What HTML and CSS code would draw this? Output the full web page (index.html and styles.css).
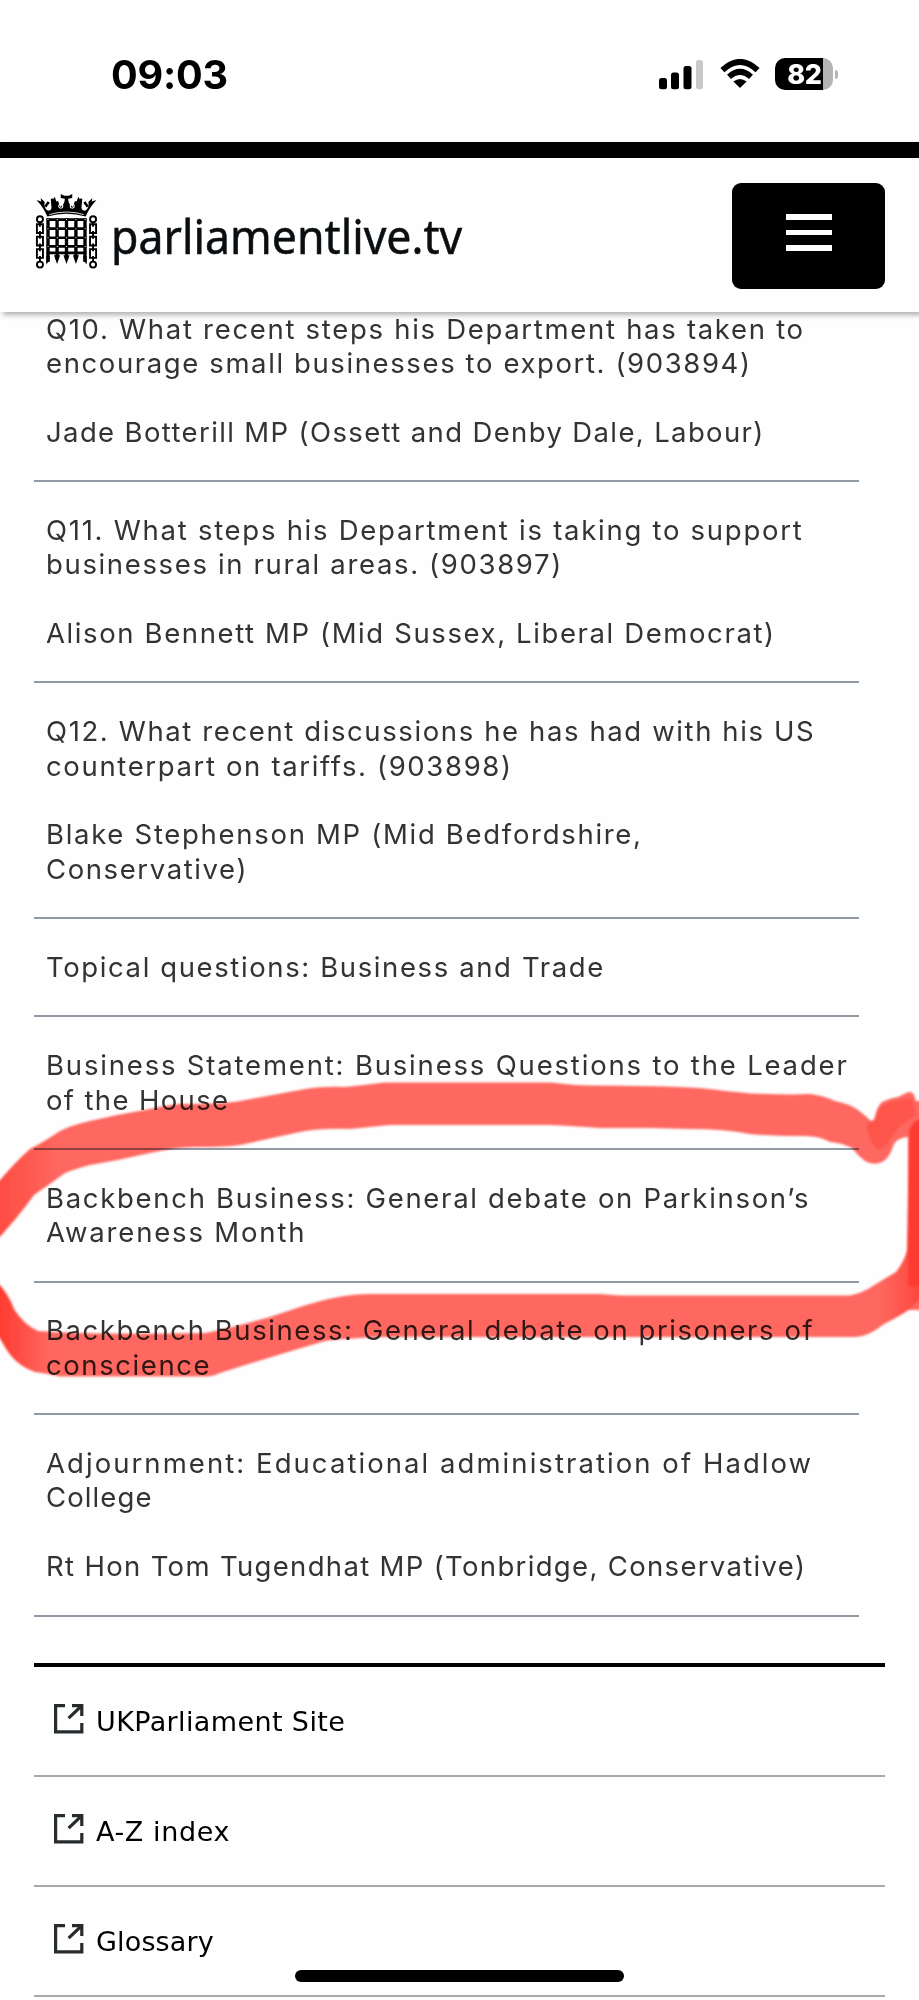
FILE: index.html
```
<!DOCTYPE html>
<html lang="en">
<head>
<meta charset="utf-8">
<title>parliamentlive.tv</title>
<link rel="stylesheet" href="styles.css">
</head>
<body>
<div class="screen">
  <div class="status">
    <span class="time">09:03</span>
    <div class="indicators">
      <svg class="signal" width="44" height="30" viewBox="0 0 44 30">
        <rect x="0" y="18" width="8" height="11.3" rx="2.5"/>
        <rect x="12" y="12.5" width="8" height="16.8" rx="2.5"/>
        <rect x="24.5" y="6" width="8" height="23.3" rx="2.5"/>
        <rect x="37" y="0" width="7" height="29.3" rx="2.5" fill="#c9c9c9"/>
      </svg>
      <svg class="wifi" width="40" height="30" viewBox="0 0 40 30">
        <g fill="none" stroke="#000" stroke-width="5.8">
          <path d="M2.4 11.2 Q20 -5.4 37.6 11.2"/>
          <path d="M9 17.9 Q20 7.8 31 17.9"/>
        </g>
        <path d="M20 29 L13.4 22.6 Q20 17.2 26.6 22.6 Z"/>
      </svg>
      <div class="battery"><div class="cell"><span>82</span></div><i></i></div>
    </div>
  </div>
  <header class="header">
    <a class="brand">
      <svg class="portcullis" width="63" height="78" viewBox="46 36 186 232">
        <path d="M82 109 Q70 82 55 66 L50 60 L64 64 L62 54 L74 66 Q70 84 84 92 Q98 92 96 72 Q96 60 104 50 L108 62 Q116 88 124 78 Q134 70 134 56 L122 54 V42 L132 47 H146 L156 42 V54 L144 56 Q144 70 154 78 Q162 88 170 62 L174 50 Q182 60 182 72 Q180 92 194 92 Q208 84 204 66 L216 54 L214 64 L228 60 L223 66 Q208 82 196 109 Q139 92 82 109Z"/>
        <path d="M76 80l10-14M99 90l-3-34M118 86l-8-22M160 86l8-22M179 90l3-34M202 80l-10-14M139 92V50" stroke="#000" stroke-width="8"/>
        <g fill="none" stroke="#fff" stroke-width="3"><circle cx="87" cy="82" r="5"/><circle cx="122" cy="78" r="6"/><circle cx="156" cy="78" r="6"/><circle cx="191" cy="82" r="5"/></g>
        <path d="M88 103 Q139 88 190 103" fill="none" stroke="#fff" stroke-width="2.5"/>
        <g fill="none" stroke="#000">
          <path stroke-width="10" d="M84 114V244M111 114V236M139 114V236M167 114V236M194 114V244"/>
          <path stroke-width="8" d="M80 118H198M80 145H198M80 172H198M80 198H198M80 217H198"/>
          <g stroke-width="5.6">
            <circle cx="60" cy="117" r="9"/><circle cx="218" cy="117" r="9"/>
            <path d="M51 132h18v26h-18zM51 169h18v26h-18zM51 206h18v26h-18zM209 132h18v26h-18zM209 169h18v26h-18zM209 206h18v26h-18z"/>
            <path d="M60 126v13M60 152v23M60 189v23M60 226v17M218 126v13M218 152v23M218 189v23M218 226v17"/>
            <circle cx="60" cy="252" r="9"/><circle cx="218" cy="252" r="9"/>
          </g>
        </g>
        <path d="M102 224h18l-9 26zM130 224h18l-9 26zM158 224h18l-9 26zM79 226h10v12l-10 14zM199 226h-10v12l10 14z"/>
        <path d="M82.500 118h115M82.500 145h115M82.500 172h115M82.500 198h115" stroke="#fff" stroke-width="3" stroke-dasharray="3 24.600" fill="none"/>
      </svg>
      <span class="brand-name">parliamentlive.tv</span>
    </a>
    <button class="menu" aria-label="Menu"><i></i><i></i><i></i></button>
  </header>
  <main class="agenda">
    <article class="item first">
      <p><span class="a1">Q10. What recent steps his Department has taken to</span><span class="a2">encourage small businesses to export. (903894)</span></p>
      <p><span class="a3">Jade Botterill MP (Ossett and Denby Dale, Labour)</span></p>
    </article>
    <article class="item">
      <p><span class="a4">Q11. What steps his Department is taking to support</span><span class="a5">businesses in rural areas. (903897)</span></p>
      <p><span class="a6">Alison Bennett MP (Mid Sussex, Liberal Democrat)</span></p>
    </article>
    <article class="item">
      <p><span class="a7">Q12. What recent discussions he has had with his US</span><span class="a8">counterpart on tariffs. (903898)</span></p>
      <p><span class="a9">Blake Stephenson MP (Mid Bedfordshire,</span><span class="a10">Conservative)</span></p>
    </article>
    <article class="item">
      <p><span class="a11">Topical questions: Business and Trade</span></p>
    </article>
    <article class="item">
      <p><span class="a12">Business Statement: Business Questions to the Leader</span><span class="a13">of the House</span></p>
    </article>
    <article class="item">
      <p><span class="a14">Backbench Business: General debate on Parkinson’s</span><span class="a15">Awareness Month</span></p>
    </article>
    <article class="item">
      <p><span class="a16">Backbench Business: General debate on prisoners of</span><span class="a17">conscience</span></p>
    </article>
    <article class="item">
      <p><span class="a18">Adjournment: Educational administration of Hadlow</span><span class="a19">College</span></p>
      <p><span class="a20">Rt Hon Tom Tugendhat MP (Tonbridge, Conservative)</span></p>
    </article>
  </main>
  <footer class="links">
    <a><svg class="ext" viewBox="0 0 30 30"><path d="M11 1.6H1.6V27.8H27.8V19"/><path d="M18 1.6H27.8V12M27 2.4L14.6 14.2"/></svg><span class="site">UKParliament Site</span></a>
    <a><svg class="ext" viewBox="0 0 30 30"><path d="M11 1.6H1.6V27.8H27.8V19"/><path d="M18 1.6H27.8V12M27 2.4L14.6 14.2"/></svg><span class="index">A-Z index</span></a>
    <a><svg class="ext" viewBox="0 0 30 30"><path d="M11 1.6H1.6V27.8H27.8V19"/><path d="M18 1.6H27.8V12M27 2.4L14.6 14.2"/></svg><span class="glossary">Glossary</span></a>
  </footer>
  <svg class="marker" width="919" height="2000" viewBox="0 0 919 2000">
    <defs>
      <linearGradient id="l1" x1="0" x2="1" y1="0" y2="0"><stop offset="0" stop-color="#ff4a40"/><stop offset=".07" stop-color="#ff6860"/><stop offset="1" stop-color="#ff6860"/></linearGradient>
      <linearGradient id="l2" x1="0" x2="1" y1="0" y2="0"><stop offset="0" stop-color="#ff382e"/><stop offset=".06" stop-color="#ff6860"/><stop offset=".95" stop-color="#ff6860"/><stop offset="1" stop-color="#ff4339"/></linearGradient>
      <filter id="soft" x="-2%" y="-5%" width="104%" height="110%"><feGaussianBlur stdDeviation=".9"/></filter>
    </defs>
    <g filter="url(#soft)">
      <path fill="url(#l1)" d="M-5 1186 Q14 1163 30 1149 Q42 1143 60 1131 Q72 1125 90 1121 Q120 1114 150 1109 Q172 1104 183 1104 Q225 1104 240 1101 L300 1090 Q320 1086 345 1087 Q365 1085 385 1082.500 H550 Q570 1085 590 1085.500 Q660 1085.500 700 1088 Q735 1092 750 1093.500 Q790 1095 810 1094 Q825 1096 835 1101 Q850 1104 858 1110 Q866 1116 871 1121 L874 1120 Q877 1106 882 1102 Q890 1098 898 1097 L906 1093 Q912 1090 914 1095 L916 1101 H925 V1310 H908 V1137 Q897 1138 894 1144 Q890 1156 885 1160 Q876 1167 865 1161 Q858 1156 852 1148 Q842 1143 830 1142 Q820 1136 805 1136 Q770 1136 750 1134 Q725 1129 690 1129 L650 1128 L600 1128 Q570 1126 550 1125 H390 Q370 1127 350 1129 Q320 1128 300 1132 L240 1145 Q225 1147 200 1147 Q180 1146 150 1153 Q120 1160 90 1165 Q75 1169 65 1173 Q50 1184 34 1195 Q16 1220 -5 1242Z"/>
      <path fill="url(#l2)" d="M-5 1280 Q8 1292 14 1309 Q24 1325 38 1331 Q90 1335 205 1333 Q222 1330 270 1317 L300 1307 Q340 1294 370 1294 H600 L620 1295.500 H850 Q859 1294 868 1289 Q884 1279 896 1272 Q905 1260 907 1250 H925 V1290 Q919 1301 910 1309 Q900 1316 884 1324 Q868 1337 855 1337 H450 Q360 1336 325 1341 Q270 1357 220 1373 Q213 1376.500 205 1376.500 H60 Q45 1373 35 1372 Q15 1365 5 1347 L-5 1330Z"/>
      <path fill="#ff3a30" d="M909 1130 Q914 1118 925 1118 V1282 Q913 1290 908 1284 Q909 1260 907 1252 Z"/>
      <path fill="#ff453b" opacity=".55" d="M867 1123 Q876 1122 879 1108 Q890 1100 912 1098 L916 1115 Q896 1126 890 1140 Q882 1152 876 1148 Q866 1136 867 1123Z"/>
    </g>
  </svg>
  <div class="home"></div>
</div>
</body>
</html>
```
FILE: styles.css
```
* { box-sizing: border-box; }
body { margin: 0; background: #fefefe; }
.screen { position: relative; width: 919px; height: 2000px; overflow: hidden; background: #fefefe; isolation: isolate; }

.status { height: 142px; display: flex; justify-content: space-between; align-items: flex-start; padding: 58px 81px 0 111px; background: #fff; }
.time { font: 700 39.6px/34px Inter, sans-serif; letter-spacing: -.2px; color: #000; }
.indicators { display: flex; align-items: flex-start; }
.signal { margin: 2px 17px 0 0; }
.wifi { margin: 1px 15px 0 0; }
.battery { display: flex; align-items: center; gap: 2px; height: 32px; }
.cell { width: 58px; height: 32px; border-radius: 10px; background: linear-gradient(90deg, #000 48px, #b4b4b4 48px); text-align: center; font: 800 27px/33px Inter, sans-serif; letter-spacing: -.3px; color: #fff; padding-left: 1px; }
.battery i { width: 3px; height: 9px; border-radius: 0 5px 5px 0; background: #b4b4b4; }

.header { position: relative; height: 170px; border-top: 16px solid #000; background: #fefefe; display: flex; justify-content: space-between; align-items: flex-start; padding: 25px 34px 0 35px; box-shadow: 3px 3px 5px rgba(0, 0, 0, .3); }
.brand { display: flex; align-items: flex-start; padding-top: 9px; }
.brand-name { margin-left: 13px; padding-top: 11px; font: 400 48px/65px "Noto Sans", sans-serif; color: #0a0e10; -webkit-text-stroke: .5px #0a0e10; transform: scaleX(.93); transform-origin: 0 0; white-space: nowrap; }
.menu { width: 153px; height: 106px; border: 0; border-radius: 9px; background: #000; padding: 31px 0 0; display: flex; flex-direction: column; align-items: center; justify-content: flex-start; gap: 10px; }
.menu i { width: 46px; height: 5.5px; background: #fff; }

.agenda { width: 825px; margin: -.5px 0 0 34px; color: #333; font: 400 27.5px/34.4px Inter, sans-serif; }
.item { padding: 30.9px 0 30.9px 12px; border-bottom: 2px solid #9199a5; }
.item.first { padding-top: 0; }
.item p { margin: 0; }
.item p + p { margin-top: 34.4px; }
.item span { display: block; white-space: nowrap; }
.a1 { letter-spacing: 1.7px; }
.a2 { letter-spacing: 1.61px; }
.a3 { letter-spacing: 1.37px; }
.a4 { letter-spacing: 1.73px; }
.a5 { letter-spacing: 1.65px; }
.a6 { letter-spacing: 1.61px; }
.a7 { letter-spacing: 1.61px; }
.a8 { letter-spacing: 1.64px; }
.a9 { letter-spacing: 1.7px; }
.a10 { letter-spacing: 1.6px; }
.a11 { letter-spacing: 1.61px; }
.a12 { letter-spacing: 1.82px; }
.a13 { letter-spacing: 1.36px; }
.a14 { letter-spacing: 1.7px; }
.a15 { letter-spacing: 1.83px; }
.a16 { letter-spacing: 1.57px; }
.a17 { letter-spacing: 1.58px; }
.a18 { letter-spacing: 2.06px; }
.a19 { letter-spacing: 1.1px; }
.a20 { letter-spacing: 1.33px; }

.links { width: 851px; margin: 46px 0 0 34px; border-top: 4.5px solid #000; }
.links a { display: flex; align-items: flex-start; height: 110px; padding: 37px 0 0 20px; border-bottom: 2px solid #a9a9a9; font: 400 27px/36px "DejaVu Sans", sans-serif; color: #000; }
.site { letter-spacing: .38px; }
.index { letter-spacing: .6px; }
.glossary { letter-spacing: .15px; }
.ext { width: 30px; height: 30px; margin: .7px 12px 0 0; fill: none; stroke: #262b2e; stroke-width: 3.2; }

.marker { position: absolute; left: 0; top: 0; mix-blend-mode: multiply; pointer-events: none; }
.home { position: absolute; left: 295px; top: 1970px; width: 329px; height: 12px; border-radius: 6px; background: #000; }
```
